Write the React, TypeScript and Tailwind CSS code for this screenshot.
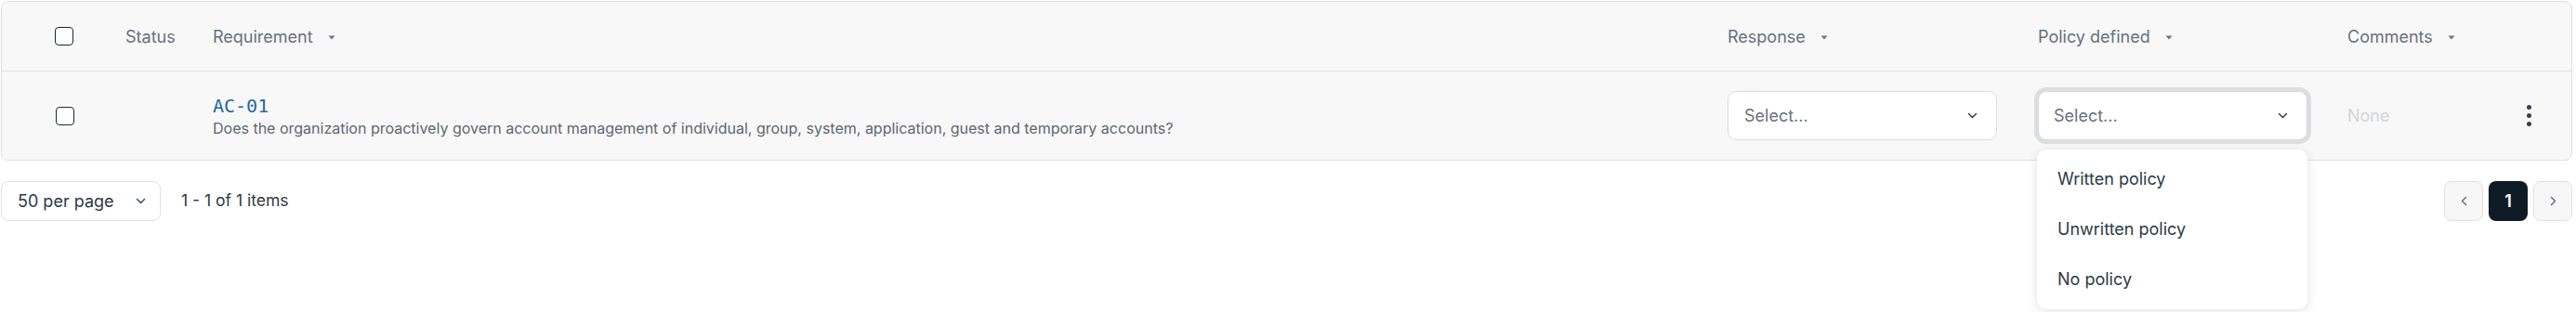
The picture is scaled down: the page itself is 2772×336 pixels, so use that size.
import React from "react";

function Caret() {
  return (
    <svg width="8" height="5" viewBox="0 0 8 5" className="ml-[16px] mt-[3px]">
      <path d="M0.5 0.5h7L4 4.5z" fill="#6b7480" />
    </svg>
  );
}

function Chevron({ color = "#3a4550" }: { color?: string }) {
  return (
    <svg width="11" height="7" viewBox="0 0 11 7" fill="none">
      <path d="M1.5 1.5l4 4 4-4" stroke={color} strokeWidth="1.6" strokeLinecap="round" strokeLinejoin="round" />
    </svg>
  );
}

function Checkbox() {
  return <div className="w-[20px] h-[20px] rounded-[4px] border-[1.5px] border-[#1d2832] bg-white" />;
}

export default function App() {
  return (
    <div className="w-full min-h-[336px] bg-white pl-[1px] pr-[4px] pt-[1px] font-['Inter',sans-serif]">
      <div className="border border-[#e0e0e0] rounded-[8px] bg-[#f8f8f8]">
        {/* header */}
        <div className="flex h-[75px] items-center border-b border-[#e0e0e0] text-[18px] text-[#67717b]">
          <div className="w-[133px] flex justify-center">
            <Checkbox />
          </div>
          <div className="w-[94px]">Status</div>
          <div className="flex-1 flex items-center">
            <span>Requirement</span>
            <Caret />
          </div>
          <div className="w-[334px] flex items-center">
            <span>Response</span>
            <Caret />
          </div>
          <div className="w-[333px] flex items-center">
            <span>Policy defined</span>
            <Caret />
          </div>
          <div className="w-[176px] flex items-center">
            <span>Comments</span>
            <Caret />
          </div>
          <div className="w-[65px]" />
        </div>
        {/* row */}
        <div className="flex h-[95px] items-center">
          <div className="w-[133px] flex justify-center">
            <div className="ml-[2px]">
              <Checkbox />
            </div>
          </div>
          <div className="w-[94px]" />
          <div className="flex-1 flex flex-col">
            <span className="font-['DejaVu_Sans_Mono',monospace] text-[20px] leading-[26px] font-medium text-[#27669b]">
              AC-01
            </span>
            <span className="text-[16px] leading-[22px] text-[#5d6770]">
              Does the organization proactively govern account management of individual, group, system, application, guest and temporary accounts?
            </span>
          </div>
          <div className="w-[334px]">
            <div className="w-[290px] h-[53px] bg-white border border-[#dcdcdc] rounded-[9px] flex items-center justify-between pl-[17px] pr-[20px]">
              <span className="text-[18px] text-[#6a727b]">Select...</span>
              <Chevron />
            </div>
          </div>
          <div className="w-[333px]">
            <div className="relative w-[290px]">
              <div className="w-[290px] h-[53px] bg-white border border-[#d8d8d8] rounded-[9px] ring-[4px] ring-[#dcdee0] flex items-center justify-between pl-[16px] pr-[20px]">
                <span className="text-[18px] text-[#6a727b]">Select...</span>
                <Chevron />
              </div>
              <div className="absolute left-[-1px] top-[63px] w-[291px] bg-white rounded-[10px] shadow-[0_2px_12px_rgba(0,0,0,0.12)] pt-[4px] pb-[6px] z-10">
                {["Written policy", "Unwritten policy", "No policy"].map((t) => (
                  <div key={t} className="h-[54px] flex items-center pl-[22px] text-[18px] text-[#2e3a44]">
                    {t}
                  </div>
                ))}
              </div>
            </div>
          </div>
          <div className="w-[176px] text-[18px] text-[#d3d5d8]">None</div>
          <div className="w-[65px] pl-[17px]">
            <div className="flex flex-col gap-[4px] w-[5px]">
              <div className="w-[5px] h-[5px] rounded-full bg-[#36414b]" />
              <div className="w-[5px] h-[5px] rounded-full bg-[#36414b]" />
              <div className="w-[5px] h-[5px] rounded-full bg-[#36414b]" />
            </div>
          </div>
        </div>
      </div>
      {/* pagination */}
      <div className="flex items-center justify-between mt-[22px]">
        <div className="flex items-center">
          <div className="w-[172px] h-[43px] bg-white border border-[#e1e1e1] rounded-[8px] flex items-center justify-between pl-[17px] pr-[15px]">
            <span className="text-[18px] text-[#2c3843]">50 per page</span>
            <Chevron color="#4a5560" />
          </div>
          <span className="ml-[22px] text-[17.5px] text-[#2f3a44]">1 - 1 of 1 items</span>
        </div>
        <div className="flex items-center gap-[6px]">
          <div className="w-[42px] h-[43px] bg-[#f7f7f7] border border-[#e1e1e1] rounded-[8px] flex items-center justify-center">
            <svg width="7" height="11" viewBox="0 0 7 11" fill="none">
              <path d="M5.5 1.5l-4 4 4 4" stroke="#6b7480" strokeWidth="1.6" strokeLinecap="round" strokeLinejoin="round" />
            </svg>
          </div>
          <div className="w-[42px] h-[43px] bg-[#0e1b24] rounded-[8px] flex items-center justify-center text-white text-[18px] font-semibold">
            1
          </div>
          <div className="w-[42px] h-[43px] bg-[#f7f7f7] border border-[#e1e1e1] rounded-[8px] flex items-center justify-center">
            <svg width="7" height="11" viewBox="0 0 7 11" fill="none">
              <path d="M1.5 1.5l4 4-4 4" stroke="#6b7480" strokeWidth="1.6" strokeLinecap="round" strokeLinejoin="round" />
            </svg>
          </div>
        </div>
      </div>
    </div>
  );
}
